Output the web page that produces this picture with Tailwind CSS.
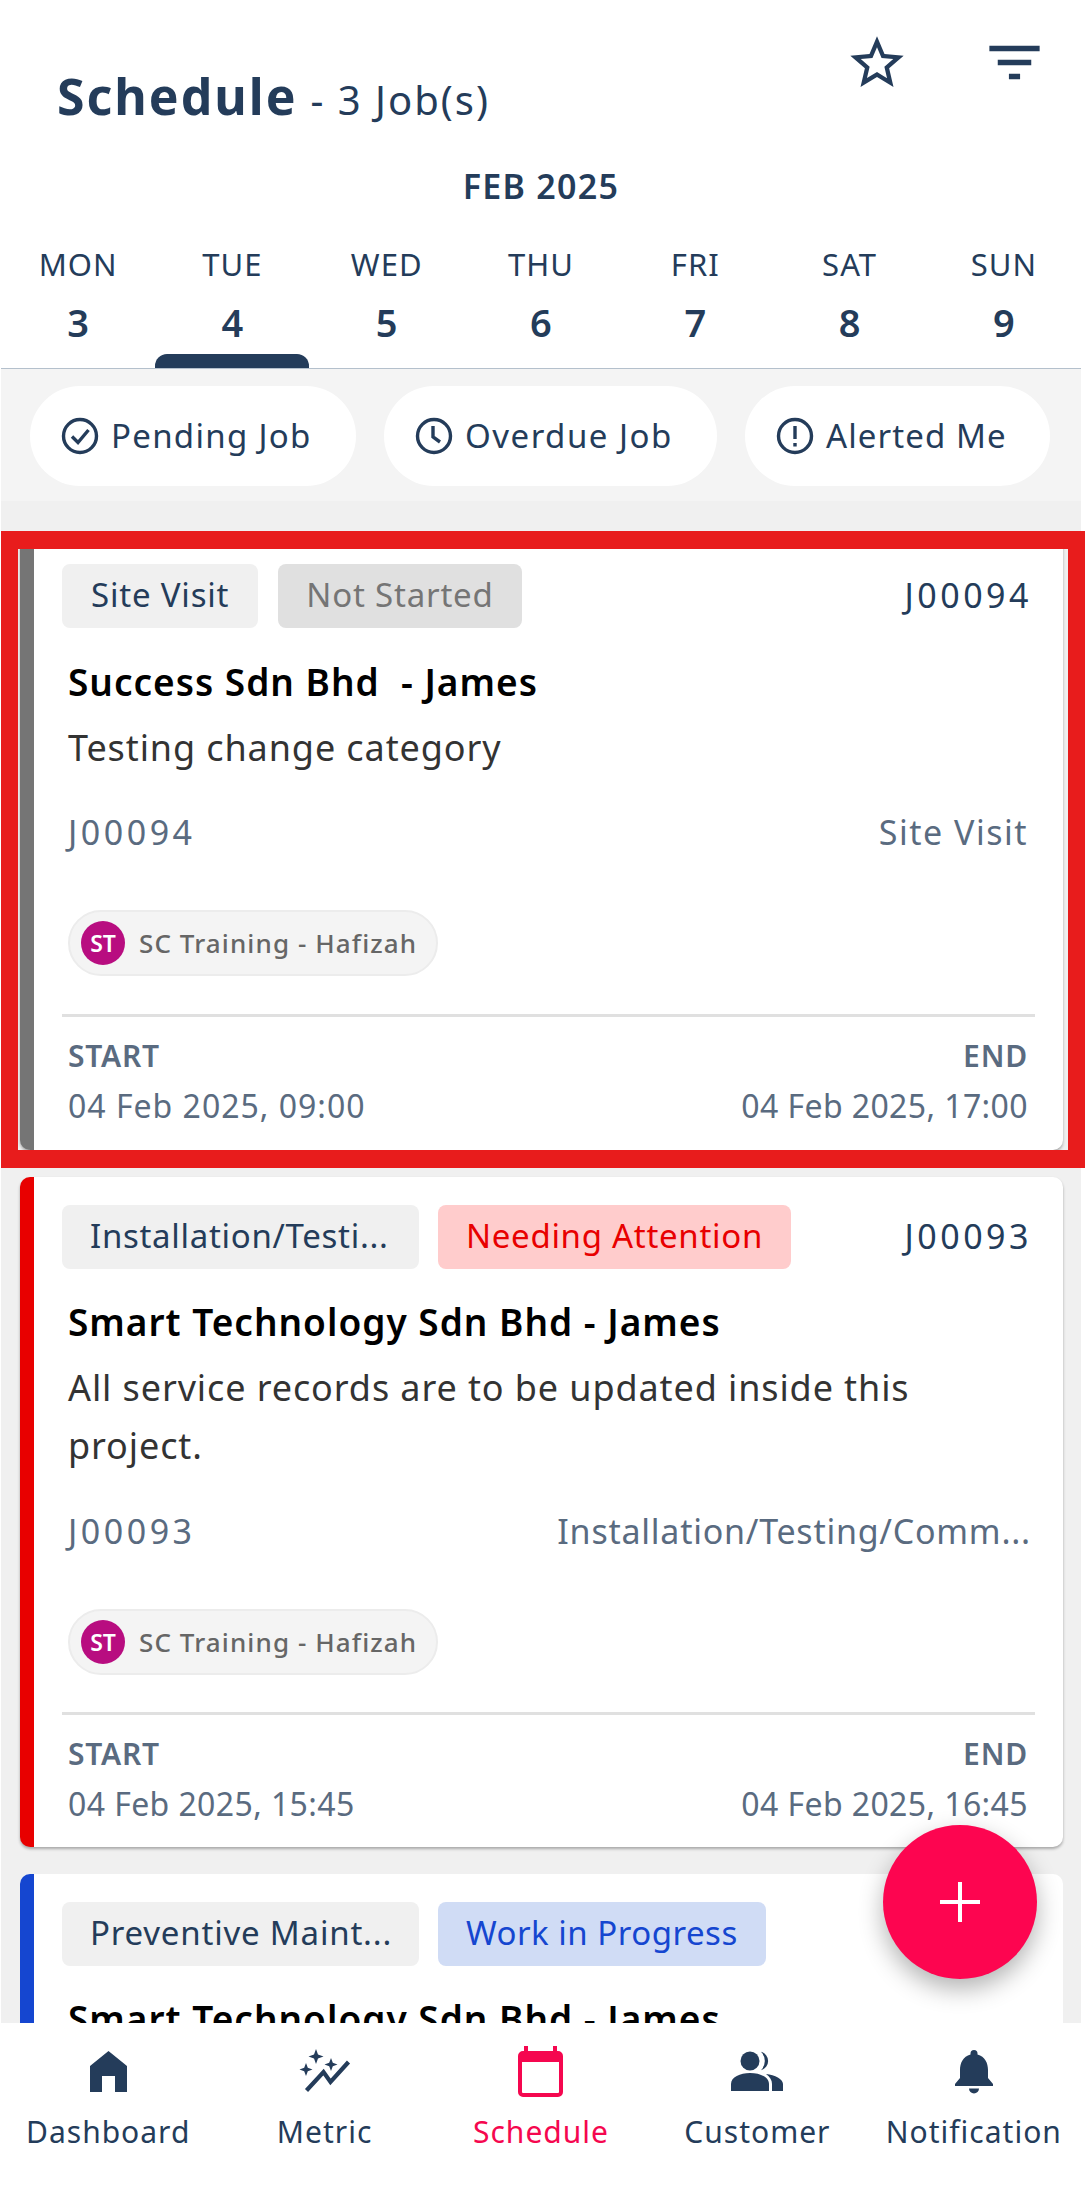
<!DOCTYPE html>
<html lang="en">
<head>
    <meta charset="UTF-8">
    <meta name="viewport" content="width=device-width, initial-scale=1.0">
    <title>Schedule</title>
    <script src="https://cdn.jsdelivr.net/npm/@tailwindcss/browser@4"></script>
</head>
<body class="bg-white font-['Noto_Sans',sans-serif] text-[#243c5a]">
<div class="relative flex h-[2187px] w-[1085px] flex-col overflow-hidden bg-white">

    <!-- Header -->
    <header class="relative ml-[1px] h-[369px] w-[1080px] shrink-0 border-b border-[#b4c0cc]">
        <div class="flex h-[150px] items-start justify-between pl-[56px] pr-[33px]">
            <h1 class="mt-[71px] flex items-baseline gap-[13px] leading-none">
                <span class="text-[50px] font-bold tracking-[2px]">Schedule</span>
                <span class="text-[40px] tracking-[2px]">- 3 Job(s)</span>
            </h1>
            <div class="mt-[31px] flex items-start gap-[72px]">
                <svg class="h-[64px] w-[64px]" viewBox="0 0 24 24" fill="currentColor"><path d="M22 9.24l-7.19-.62L12 2 9.19 8.63 2 9.24l5.46 4.73L5.82 21 12 17.27 18.18 21l-1.63-7.03L22 9.24zM12 15.4l-3.76 2.27 1-4.28-3.32-2.88 4.38-.38L12 6.1l1.71 4.04 4.38.38-3.32 2.88 1 4.28L12 15.4z"/></svg>
                <svg class="-mt-[2px] h-[67px] w-[67px]" viewBox="0 0 24 24" fill="currentColor"><path d="M10 18h4v-2h-4v2zM3 6v2h18V6H3zm3 7h12v-2H6v2z"/></svg>
            </div>
        </div>
        <p class="mt-[14px] text-center text-[34px] font-semibold leading-[44px] tracking-[1.300px]">FEB 2025</p>
        <div class="mt-[36px] grid grid-cols-7 text-center">
            <div><p class="text-[31px] leading-[40px] tracking-[1px]">MON</p><p class="mt-[16px] text-[38px] font-semibold leading-[44px]">3</p></div>
            <div><p class="text-[31px] leading-[40px] tracking-[1px]">TUE</p><p class="mt-[16px] text-[38px] font-semibold leading-[44px]">4</p></div>
            <div><p class="text-[31px] leading-[40px] tracking-[1px]">WED</p><p class="mt-[16px] text-[38px] font-semibold leading-[44px]">5</p></div>
            <div><p class="text-[31px] leading-[40px] tracking-[1px]">THU</p><p class="mt-[16px] text-[38px] font-semibold leading-[44px]">6</p></div>
            <div><p class="text-[31px] leading-[40px] tracking-[1px]">FRI</p><p class="mt-[16px] text-[38px] font-semibold leading-[44px]">7</p></div>
            <div><p class="text-[31px] leading-[40px] tracking-[1px]">SAT</p><p class="mt-[16px] text-[38px] font-semibold leading-[44px]">8</p></div>
            <div><p class="text-[31px] leading-[40px] tracking-[1px]">SUN</p><p class="mt-[16px] text-[38px] font-semibold leading-[44px]">9</p></div>
        </div>
        <div class="absolute bottom-0 left-[154px] h-[14px] w-[154px] rounded-t-[12px] bg-[#243c5a]"></div>
    </header>

    <!-- Filter pills -->
    <div class="ml-[1px] flex h-[132px] w-[1080px] shrink-0 items-start gap-[28px] bg-[#f4f4f4] pl-[29px] pt-[17px]">
        <div class="flex h-[100px] w-[326px] items-center gap-[12px] rounded-full bg-white pl-[31px]">
            <svg class="h-[38px] w-[38px] shrink-0" viewBox="0 0 38 38" fill="none" stroke="currentColor" stroke-width="3.4"><circle cx="19" cy="19" r="16.5"/><path d="M11 19.5l6 6L27.5 13"/></svg>
            <span class="pb-[2px] text-[33px] leading-none tracking-[1.300px]">Pending Job</span>
        </div>
        <div class="flex h-[100px] w-[333px] items-center gap-[12px] rounded-full bg-white pl-[31px]">
            <svg class="h-[38px] w-[38px] shrink-0" viewBox="0 0 38 38" fill="none" stroke="currentColor" stroke-width="3.4"><circle cx="19" cy="19" r="16.5"/><path d="M18 9v11l7 5"/></svg>
            <span class="pb-[2px] text-[33px] leading-none tracking-[1.500px]">Overdue Job</span>
        </div>
        <div class="flex h-[100px] w-[305px] items-center gap-[12px] rounded-full bg-white pl-[31px]">
            <svg class="h-[38px] w-[38px] shrink-0" viewBox="0 0 38 38" fill="none" stroke="currentColor" stroke-width="3.4"><circle cx="19" cy="19" r="16.5"/><path d="M19 9v13M19 26v3.5"/></svg>
            <span class="pb-[2px] text-[33px] leading-none tracking-[1.100px]">Alerted Me</span>
        </div>
    </div>

    <!-- Job list -->
    <main class="ml-[1px] flex min-h-0 w-[1080px] flex-1 flex-col gap-[27px] overflow-hidden bg-[#f0f0f0] pl-[19px] pr-[18px] pt-[35px]">

        <article class="shrink-0 rounded-[10px] border-l-[14px] border-[#757575] bg-white pb-[20px] pl-[28px] pr-[28px] pt-[28px] shadow-[0_2px_3px_rgba(0,0,0,0.3)]">
            <div class="flex h-[64px] items-center gap-[20px] text-[33px] tracking-[0.800px]">
                <span class="flex h-[64px] items-center rounded-[8px] bg-[#f0f0f0] px-[29px] pb-[2px]">Site Visit</span>
                <span class="flex h-[64px] items-center rounded-[8px] bg-[#e0e0e0] px-[28px] pb-[2px] text-[#757575]">Not Started</span>
                <span class="ml-auto pb-[2px] pr-[3px] text-[34px] tracking-[3.500px]">J00094</span>
            </div>
            <div class="pl-[6px] pr-[7px]">
                <h2 class="mt-[30px] text-[37px] font-semibold leading-[48px] tracking-[1px] text-black">Success Sdn Bhd&nbsp; - James</h2>
                <p class="mt-[13px] text-[36px] leading-[58px] tracking-[0.900px] text-[#333333]">Testing change category</p>
                <div class="mt-[26px] flex justify-between text-[34px] leading-[58px] text-[#5a6b80]"><span class="tracking-[3.500px]">J00094</span><span class="tracking-[1.500px]">Site Visit</span></div>
                <div class="mt-[49px] flex h-[66px] w-[370px] items-center gap-[14px] rounded-full border-2 border-[#ececec] bg-[#f4f4f4] pl-[11px]">
                    <span class="flex h-[44px] w-[44px] items-center justify-center rounded-full bg-[#b80d80] text-[23px] font-semibold text-white">ST</span>
                    <span class="text-[26px] font-medium tracking-[1.100px] text-[#666666]">SC Training - Hafizah</span>
                </div>
            </div>
            <div class="mt-[38px] border-t-[3px] border-[#e0e0e0] pl-[6px] pr-[7px] pt-[19px]">
                <div class="flex justify-between text-[30px] font-semibold leading-[40px] tracking-[0.800px] text-[#5a6b80]"><span>START</span><span>END</span></div>
                <div class="mt-[6px] flex justify-between text-[32px] leading-[48px] text-[#5a6b80]"><span class="tracking-[1px]">04 Feb 2025, 09:00</span><span class="tracking-[0.400px]">04 Feb 2025, 17:00</span></div>
            </div>
        </article>

        <article class="shrink-0 rounded-[10px] border-l-[14px] border-[#e80000] bg-white pb-[19px] pl-[28px] pr-[28px] pt-[28px] shadow-[0_2px_3px_rgba(0,0,0,0.3)]">
            <div class="flex h-[64px] items-center gap-[19px] text-[33px] tracking-[0.700px]">
                <span class="flex h-[64px] w-[357px] items-center whitespace-nowrap rounded-[8px] bg-[#f0f0f0] px-[28px] pb-[2px]">Installation/Testi...</span>
                <span class="flex h-[64px] items-center rounded-[8px] bg-[#ffcccc] px-[28px] pb-[2px] text-[#e80000]">Needing Attention</span>
                <span class="ml-auto pb-[2px] pr-[3px] text-[34px] tracking-[3.500px]">J00093</span>
            </div>
            <div class="pl-[6px] pr-[4px]">
                <h2 class="mt-[29px] text-[37px] font-semibold leading-[48px] tracking-[1px] text-black">Smart Technology Sdn Bhd - James</h2>
                <p class="mt-[13px] text-[36px] leading-[58px] tracking-[0.900px] text-[#333333]">All service records are to be updated inside this project.</p>
                <div class="mt-[27px] flex justify-between text-[34px] leading-[58px] text-[#5a6b80]"><span class="tracking-[3.500px]">J00093</span><span class="whitespace-nowrap tracking-[0.750px]">Installation/Testing/Comm...</span></div>
                <div class="mt-[49px] flex h-[66px] w-[370px] items-center gap-[14px] rounded-full border-2 border-[#ececec] bg-[#f4f4f4] pl-[11px]">
                    <span class="flex h-[44px] w-[44px] items-center justify-center rounded-full bg-[#b80d80] text-[23px] font-semibold text-white">ST</span>
                    <span class="text-[26px] font-medium tracking-[1.100px] text-[#666666]">SC Training - Hafizah</span>
                </div>
            </div>
            <div class="mt-[37px] border-t-[3px] border-[#e0e0e0] pl-[6px] pr-[7px] pt-[19px]">
                <div class="flex justify-between text-[30px] font-semibold leading-[40px] tracking-[0.800px] text-[#5a6b80]"><span>START</span><span>END</span></div>
                <div class="mt-[6px] flex justify-between text-[32px] leading-[48px] tracking-[0.400px] text-[#5a6b80]"><span>04 Feb 2025, 15:45</span><span>04 Feb 2025, 16:45</span></div>
            </div>
        </article>

        <article class="h-[300px] shrink-0 rounded-[10px] border-l-[14px] border-[#1546d0] bg-white pl-[28px] pr-[28px] pt-[28px]">
            <div class="flex h-[64px] items-center gap-[19px] text-[33px] tracking-[0.500px]">
                <span class="flex h-[64px] w-[357px] items-center whitespace-nowrap rounded-[8px] bg-[#f0f0f0] px-[28px] pb-[2px] tracking-[0.800px]">Preventive Maint...</span>
                <span class="flex h-[64px] items-center rounded-[8px] bg-[#d0dcf5] px-[28px] pb-[2px] text-[#1546d0]">Work in Progress</span>
            </div>
            <h2 class="mt-[29px] pl-[6px] text-[37px] font-semibold leading-[48px] tracking-[1px] text-black">Smart Technology Sdn Bhd - James</h2>
        </article>
    </main>

    <!-- Bottom navigation -->
    <nav class="z-10 grid h-[164px] w-[1085px] shrink-0 grid-cols-5 bg-white pr-[3px] pt-[23px] text-center text-[30px] leading-[40px] tracking-[1px]">
        <div class="flex flex-col items-center">
            <svg class="mt-[5px] h-[41px] w-[37px]" viewBox="0 0 37 41" fill="currentColor"><path d="M18.5 0L37 15v26H25V25H12v16H0V15z"/></svg>
            <span class="mt-[20px]">Dashboard</span>
        </div>
        <div class="flex flex-col items-center">
            <svg class="mt-[3px] h-[43px] w-[52px]" viewBox="0 0 52 43" fill="currentColor"><path d="M17 0l2 5.500 5.500 2-5.500 2-2 5.500-2-5.500-5.500-2 5.500-2zM32 9l1.800 4.700 4.700 1.800-4.700 1.800L32 22l-1.800-4.700-4.700-1.800 4.700-1.800zM7 14l1.800 4.700 4.700 1.800-4.700 1.800L7 27l-1.800-4.700L.5 20.500l4.700-1.800z"/><path d="M7.500 41.500L24.500 23l7 10L49.500 13" fill="none" stroke="currentColor" stroke-width="4.200"/></svg>
            <span class="mt-[20px]">Metric</span>
        </div>
        <div class="flex flex-col items-center text-[#f5074f]">
            <svg class="h-[51px] w-[45px]" viewBox="0 0 45 51" fill="currentColor"><path d="M6 0h4v5h25V0h4v5h1a5 5 0 0 1 5 5v36a5 5 0 0 1-5 5H5a5 5 0 0 1-5-5V10a5 5 0 0 1 5-5h1zM4 16v30a1 1 0 0 0 1 1h35a1 1 0 0 0 1-1V16z"/></svg>
            <span class="mt-[15px]">Schedule</span>
        </div>
        <div class="flex flex-col items-center">
            <svg class="mt-[5px] h-[40px] w-[52px]" viewBox="0 0 52 40" fill="currentColor"><circle cx="19" cy="10" r="9.500"/><path d="M30 .8a9.500 9.500 0 0 1 0 18.400 13 13 0 0 0 0-18.400zM0 40v-7c0-7 9-11 19-11s19 4 19 11v7zM41 40v-7c0-4-2-7-6-10 9 1 17 5 17 10v7z"/></svg>
            <span class="mt-[21px]">Customer</span>
        </div>
        <div class="flex flex-col items-center">
            <svg class="mt-[4px] h-[44px] w-[38px]" viewBox="0 0 38 44" fill="currentColor"><path d="M19 0a3.500 3.500 0 0 1 3.500 3.500v1C30 6.500 33 13 33 20v8l5 6v2H0v-2l5-6v-8C5 13 8 6.500 15.500 4.500v-1A3.500 3.500 0 0 1 19 0zM14 38.500h10a5 5 0 0 1-10 0z"/></svg>
            <span class="mt-[18px]">Notification</span>
        </div>
    </nav>

    <!-- Floating add button -->
    <button class="absolute left-[883px] top-[1825px] z-10 flex h-[154px] w-[154px] items-center justify-center rounded-full bg-[#fd0550] shadow-[0_10px_24px_rgba(0,0,0,0.3)]">
        <svg class="h-[40px] w-[40px]" viewBox="0 0 40 40" fill="none" stroke="white" stroke-width="4"><path d="M20 0v40M0 20h40"/></svg>
    </button>

    <!-- Red highlight frame around the first card -->
    <div class="absolute left-[1px] top-[531px] h-[637px] w-[1084px] border-y-[18px] border-l-[17px] border-r-[17px] border-[#e81c1c]"></div>
</div>
</body>
</html>
